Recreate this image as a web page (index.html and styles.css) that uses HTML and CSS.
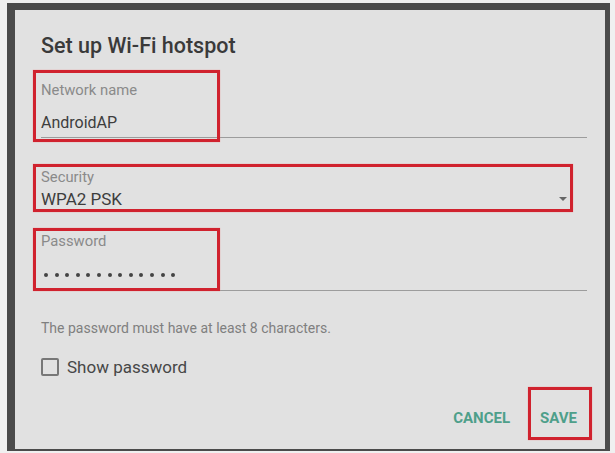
FILE: index.html
```html
<!DOCTYPE html>
<html lang="en">
<head>
  <meta charset="UTF-8">
  <meta name="viewport" content="width=device-width, initial-scale=1.0">
  <title>Set up Wi-Fi hotspot</title>
  <link rel="stylesheet" href="styles.css">
</head>
<body>
  <div class="dialog">
    <h1 class="title">Set up Wi-Fi hotspot</h1>

    <div class="field field-name">
      <div class="label">Network name</div>
      <div class="value">AndroidAP</div>
      <span class="mark mark-name"></span>
    </div>

    <div class="field field-security">
      <div class="label">Security</div>
      <div class="spinner">
        <span class="value">WPA2 PSK</span>
        <span class="arrow"></span>
      </div>
      <span class="mark mark-security"></span>
    </div>

    <div class="field field-pass">
      <div class="label">Password</div>
      <div class="dots">
        <i></i><i></i><i></i><i></i><i></i><i></i><i></i><i></i><i></i><i></i><i></i><i></i><i></i>
      </div>
      <span class="mark mark-pass"></span>
    </div>

    <p class="hint">The password must have at least 8 characters.</p>

    <label class="check">
      <span class="box"></span>
      <span>Show password</span>
    </label>

    <div class="actions">
      <a href="javascript:;" class="btn">CANCEL</a>
      <a href="javascript:;" class="btn btn-save">SAVE<span class="mark mark-save"></span></a>
    </div>
  </div>
</body>
</html>
```

FILE: styles.css
```css
*{margin:0;padding:0;box-sizing:border-box;}
body{background:#f0f0f0;font-family:Roboto,"Liberation Sans",sans-serif;}
.dialog{margin:3px 5px 0 7px;height:448px;background:#e1e1e1;border-style:solid;border-color:#4b4b4b;border-width:7px 5px 2px 8px;padding:23px 18px 0 26px;display:flex;flex-direction:column;}
.title{font-size:21.5px;line-height:26px;font-weight:500;color:#3a3a3a;}

/* text fields with an underline */
.field{position:relative;border-bottom:1px solid #9c9c9c;}
.label{font-size:14.8px;line-height:16px;color:#8a8a8a;}
.value{font-size:16px;line-height:22px;color:#3d3d3d;}
.field-name{margin-top:17px;padding:6px 0 3px;}
.field-name .value{margin-top:14px;}
.field-security{margin-top:29px;padding:2px 0 1px;border-bottom-color:transparent;}
.spinner{display:flex;align-items:center;margin-top:4px;}
.spinner .value{font-size:17px;line-height:20px;}
.arrow{margin-left:auto;margin-right:20px;width:0;height:0;border-left:4px solid transparent;border-right:4px solid transparent;border-top:4px solid #666;}
.field-pass{margin-top:20px;padding:2px 0 10px;}
.dots{display:flex;gap:6.6px;margin-top:21px;height:10px;align-items:center;padding-left:3px;}
.dots i{width:4px;height:4px;border-radius:50%;background:#444;}

/* red highlight frames */
.mark{position:absolute;border:3px solid #d0222e;box-shadow:0 0 1px #e88;}
.mark-name{left:-8px;top:-6px;width:187px;height:72px;}
.mark-security{left:-8px;top:-3px;width:540px;height:48px;}
.mark-pass{left:-8px;top:-3px;width:187px;height:63px;}
.mark-save{left:-4px;top:-22px;right:-7px;bottom:-13px;}

.hint{margin-top:29px;font-size:14px;line-height:16px;color:#7f7f7f;}
.check{display:flex;align-items:center;gap:8px;margin-top:21px;font-size:17px;line-height:20px;color:#474747;}
.box{width:18px;height:18px;border:2px solid #777;border-radius:2px;}
.actions{display:flex;justify-content:flex-end;gap:14px;margin-top:32px;margin-right:2px;}
.btn{position:relative;padding:0 8px;font-size:15px;line-height:18px;font-weight:700;color:#4e9f8a;text-decoration:none;}
```
